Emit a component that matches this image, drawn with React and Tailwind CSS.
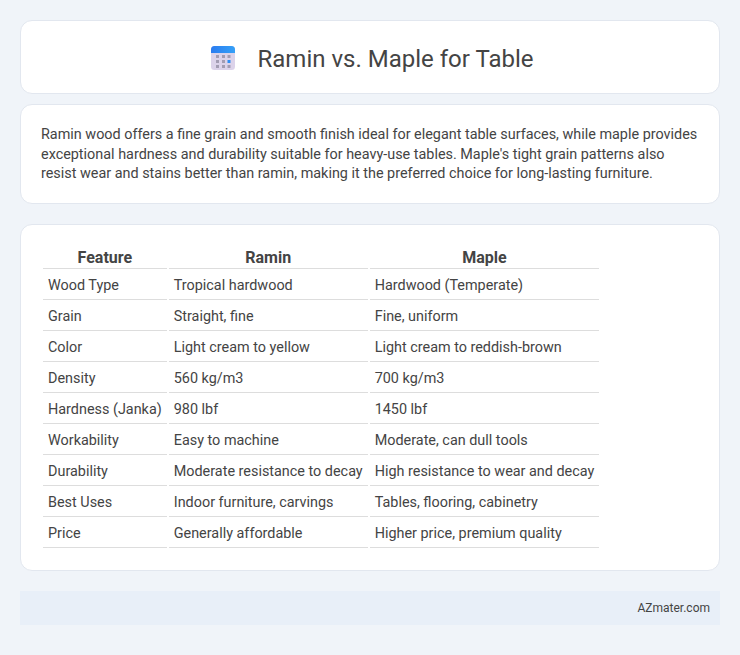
const rows = [
  ["Wood Type", "Tropical hardwood", "Hardwood (Temperate)"],
  ["Grain", "Straight, fine", "Fine, uniform"],
  ["Color", "Light cream to yellow", "Light cream to reddish-brown"],
  ["Density", "560 kg/m3", "700 kg/m3"],
  ["Hardness (Janka)", "980 lbf", "1450 lbf"],
  ["Workability", "Easy to machine", "Moderate, can dull tools"],
  ["Durability", "Moderate resistance to decay", "High resistance to wear and decay"],
  ["Best Uses", "Indoor furniture, carvings", "Tables, flooring, cabinetry"],
  ["Price", "Generally affordable", "Higher price, premium quality"],
];

function CalendarIcon() {
  return (
    <svg width="24" height="24" viewBox="0 0 24 24" className="shrink-0">
      <defs>
        <linearGradient id="calTop" x1="0" y1="0" x2="1" y2="0">
          <stop offset="0" stopColor="#2b7cf0" />
          <stop offset="1" stopColor="#35a0f7" />
        </linearGradient>
      </defs>
      <rect x="0" y="0" width="24" height="24" rx="3.5" fill="#dcd3ea" />
      <path d="M0 7V3.5A3.5 3.5 0 0 1 3.5 0h17A3.5 3.5 0 0 1 24 3.5V7Z" fill="url(#calTop)" />
      {[5, 11, 16.5].map((x) =>
        [9, 14, 19].map((y) => (
          <rect
            key={`${x}-${y}`}
            x={x}
            y={y}
            width="3"
            height="3"
            fill={x === 16.5 && y === 14 ? "#2f8df2" : "#a39db3"}
          />
        ))
      )}
    </svg>
  );
}

export default function App() {
  return (
    <div className="min-h-[655px] bg-[#f0f4f9] p-5 font-['Roboto',sans-serif] text-[#444]">
      <div className="flex h-[74px] items-center justify-center gap-[23px] rounded-xl border border-[#e2e7ef] bg-white pt-0.5 pl-1">
        <CalendarIcon />
        <h1 className="pt-0.5 text-2xl font-normal text-[#444]">Ramin vs. Maple for Table</h1>
      </div>

      <div className="mt-2.5 h-[100px] rounded-xl border border-[#e2e7ef] bg-white px-5 py-[20px] text-[14.4px] leading-[19.5px]">
        <p>
          Ramin wood offers a fine grain and smooth finish ideal for elegant table surfaces, while maple provides
          exceptional hardness and durability suitable for heavy-use tables. Maple's tight grain patterns also
          resist wear and stains better than ramin, making it the preferred choice for long-lasting furniture.
        </p>
      </div>

      <div className="mt-5 h-[347px] rounded-xl border border-[#e2e7ef] bg-white px-5 pt-[19px]">
        <table className="border-separate border-spacing-[2px] text-[14.4px]">
          <thead>
            <tr>
              <th className="border-b border-[#ddd] px-[5px] pt-[2px] pb-[1px] text-center text-base leading-[19px] font-bold">Feature</th>
              <th className="border-b border-[#ddd] px-[5px] pt-[2px] pb-[1px] text-center text-base leading-[19px] font-bold">Ramin</th>
              <th className="border-b border-[#ddd] px-[5px] pt-[2px] pb-[1px] text-center text-base leading-[19px] font-bold">Maple</th>
            </tr>
          </thead>
          <tbody>
            {rows.map((row) => (
              <tr key={row[0]}>
                {row.map((cell) => (
                  <td key={cell} className="border-b border-[#ddd] px-[5px] pt-[5px] pb-[4px] leading-[19px]">
                    {cell}
                  </td>
                ))}
              </tr>
            ))}
          </tbody>
        </table>
      </div>

      <div className="mt-5 flex h-[34px] items-center justify-end bg-[#e8eff8] px-2.5 text-xs">
        AZmater.com
      </div>
    </div>
  );
}
